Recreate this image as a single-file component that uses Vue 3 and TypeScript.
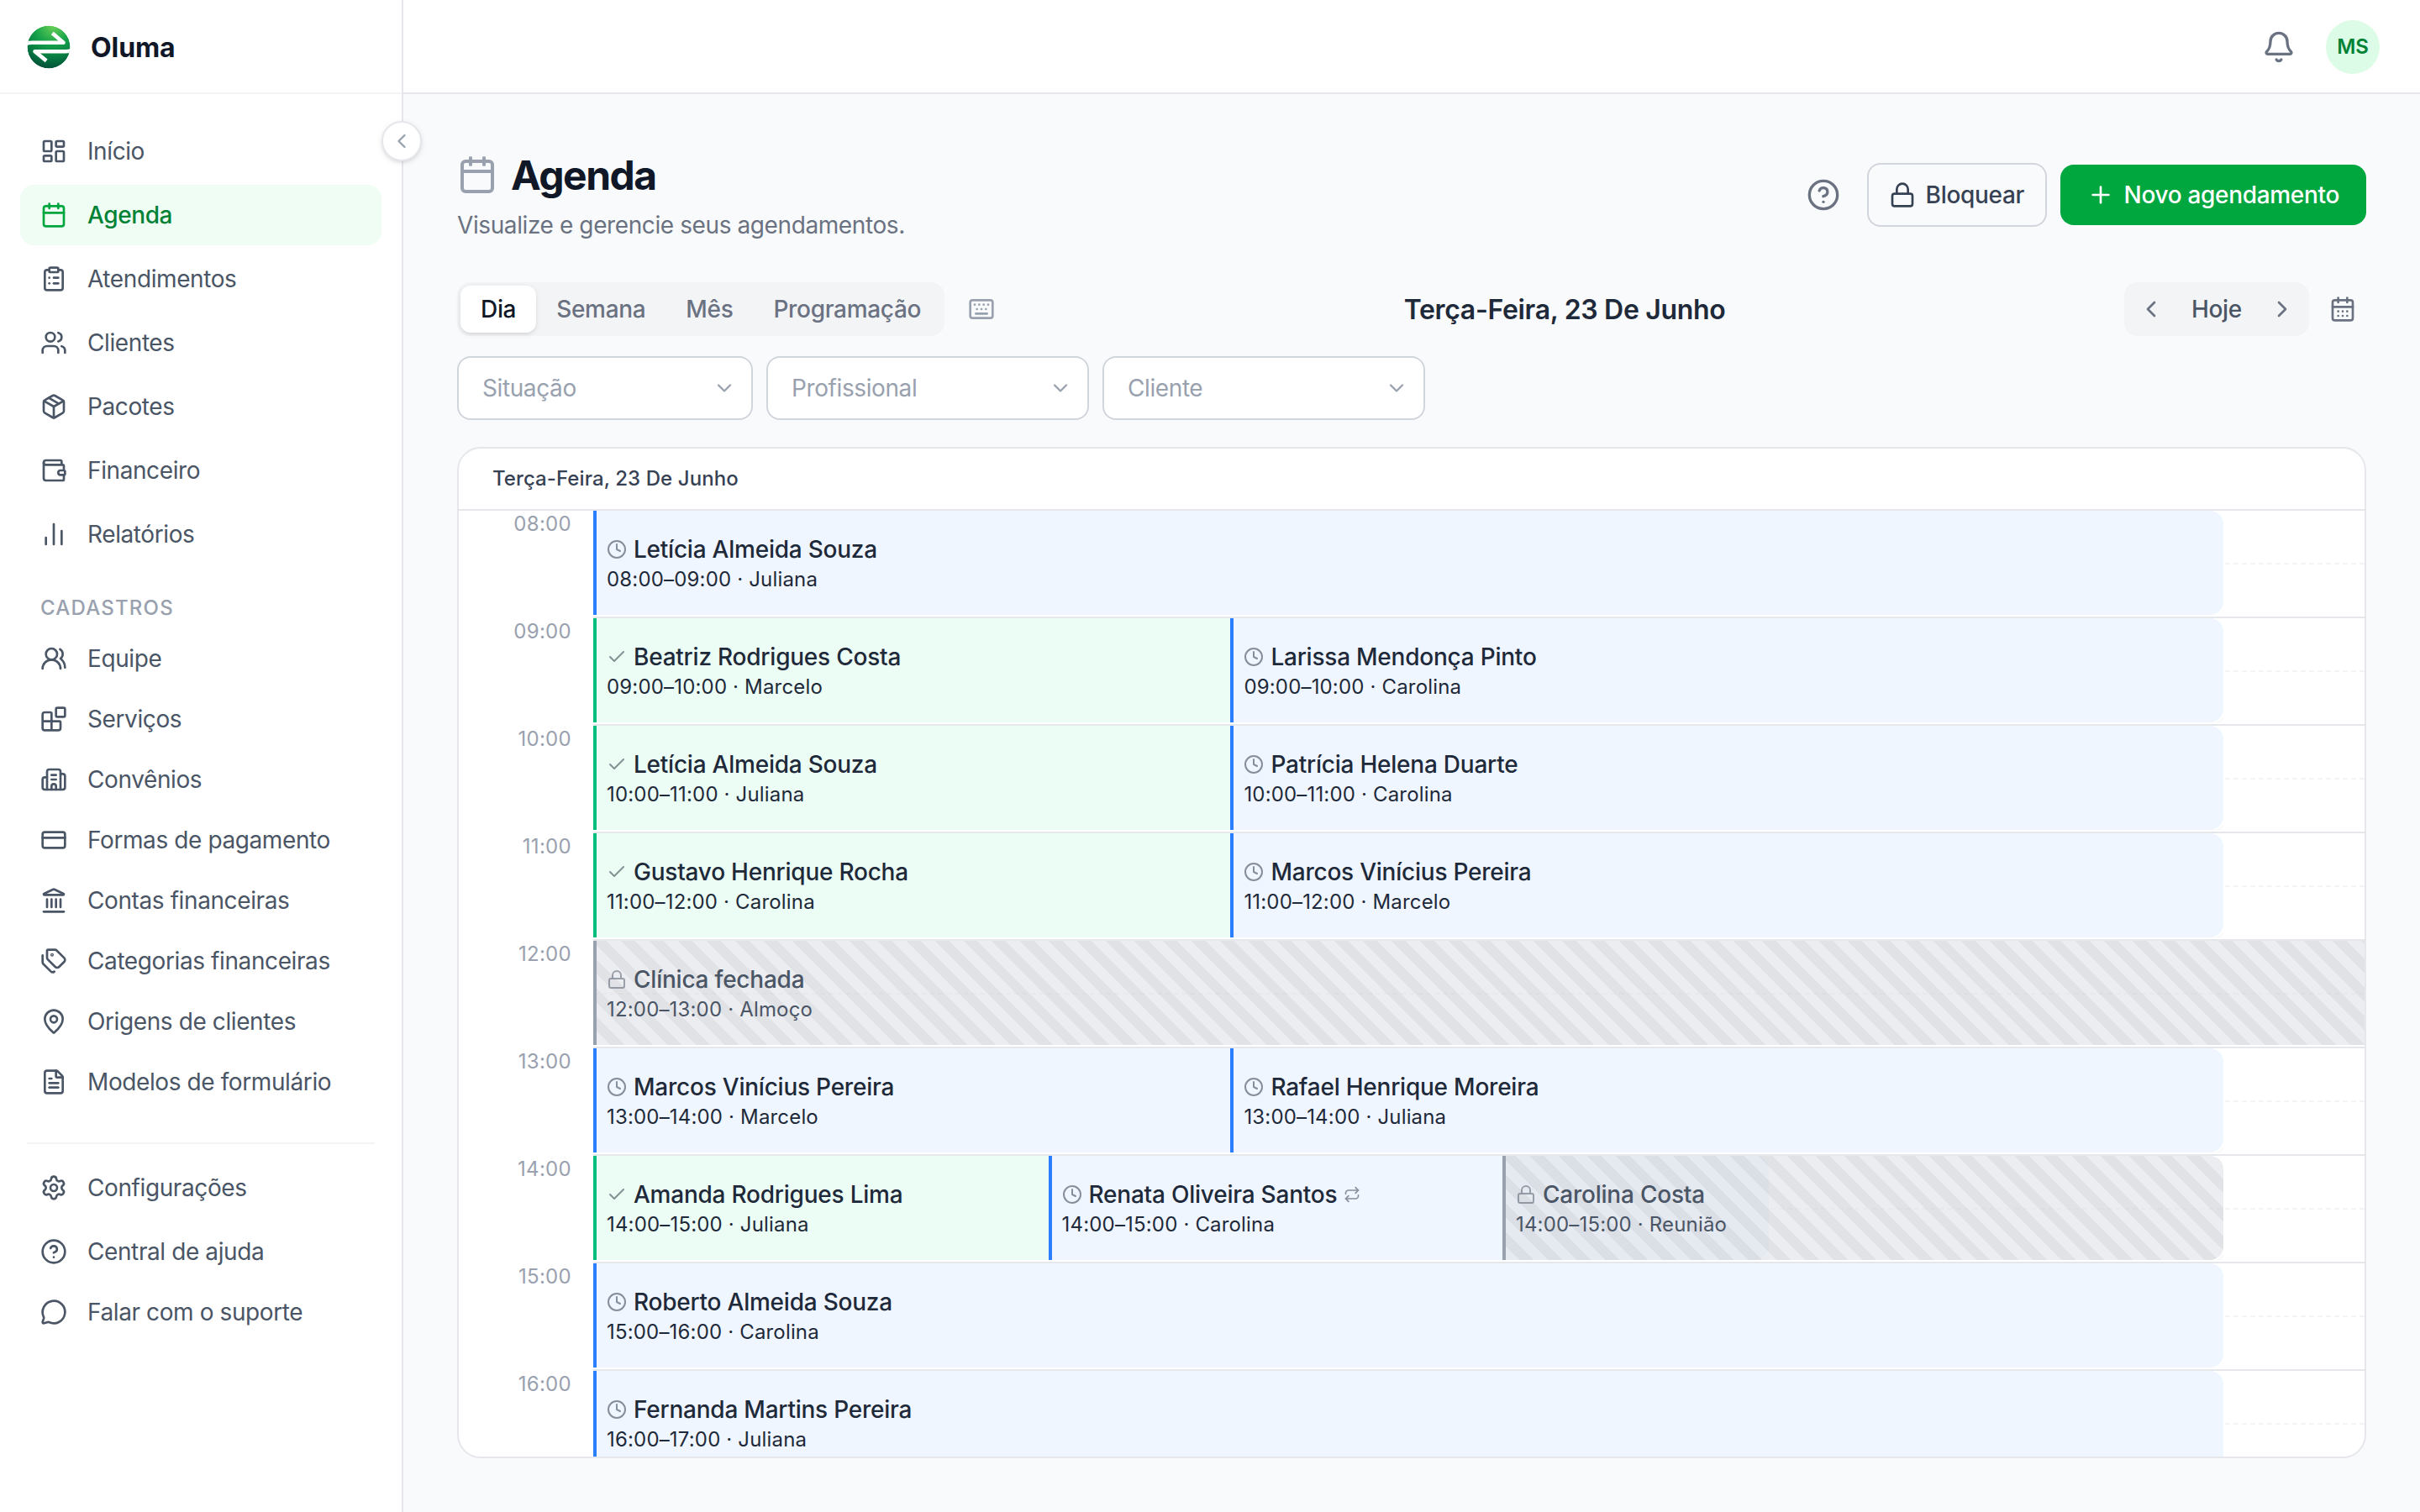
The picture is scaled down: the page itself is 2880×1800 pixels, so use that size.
<script setup lang="ts">
import { defineComponent, h } from 'vue'

type Shape = [string, Record<string, string | number>]

const p = (d: string): Shape => ['path', { d }]
const r = (x: number, y: number, width: number, height: number, rx: number): Shape => [
  'rect',
  { x, y, width, height, rx },
]
const c = (cx: number, cy: number, radius: number): Shape => ['circle', { cx, cy, r: radius }]

const icons: Record<string, Shape[]> = {
  dashboard: [r(3, 3, 7, 9, 1), r(14, 3, 7, 5, 1), r(14, 12, 7, 9, 1), r(3, 16, 7, 5, 1)],
  calendar: [p('M8 2v4'), p('M16 2v4'), r(3, 4, 18, 18, 2), p('M3 10h18')],
  calendarDays: [
    p('M8 2v4'), p('M16 2v4'), r(3, 4, 18, 18, 2), p('M3 10h18'),
    p('M8 14h.01'), p('M12 14h.01'), p('M16 14h.01'), p('M8 18h.01'), p('M12 18h.01'), p('M16 18h.01'),
  ],
  clipboard: [
    r(8, 2, 8, 4, 1),
    p('M16 4h2a2 2 0 0 1 2 2v14a2 2 0 0 1-2 2H6a2 2 0 0 1-2-2V6a2 2 0 0 1 2-2h2'),
    p('M12 11h4'), p('M12 16h4'), p('M8 11h.01'), p('M8 16h.01'),
  ],
  users: [
    p('M16 21v-2a4 4 0 0 0-4-4H6a4 4 0 0 0-4 4v2'), p('M16 3.128a4 4 0 0 1 0 7.744'),
    p('M22 21v-2a4 4 0 0 0-3-3.87'), c(9, 7, 4),
  ],
  package: [
    p('M11 21.73a2 2 0 0 0 2 0l7-4A2 2 0 0 0 21 16V8a2 2 0 0 0-1-1.73l-7-4a2 2 0 0 0-2 0l-7 4A2 2 0 0 0 3 8v8a2 2 0 0 0 1 1.73z'),
    p('M12 22V12'), p('M3.29 7 12 12l8.71-5'), p('m7.5 4.27 9 5.15'),
  ],
  wallet: [
    p('M19 7V4a1 1 0 0 0-1-1H5a2 2 0 0 0 0 4h15a1 1 0 0 1 1 1v4h-3a2 2 0 0 0 0 4h3a1 1 0 0 0 1-1v-2a1 1 0 0 0-1-1'),
    p('M3 5v14a2 2 0 0 0 2 2h15a1 1 0 0 0 1-1v-4'),
  ],
  chart: [p('M5 21v-6'), p('M12 21V3'), p('M19 21V9')],
  usersRound: [p('M18 21a8 8 0 0 0-16 0'), c(10, 8, 5), p('M22 20c0-3.37-2-6.5-4-8a5 5 0 0 0-.45-8.3')],
  blocks: [
    p('M10 22V7a1 1 0 0 0-1-1H4a2 2 0 0 0-2 2v12a2 2 0 0 0 2 2h12a2 2 0 0 0 2-2v-5a1 1 0 0 0-1-1H2'),
    r(14, 2, 8, 8, 1),
  ],
  building: [
    p('M10 12h4'), p('M10 8h4'), p('M14 21v-3a2 2 0 0 0-4 0v3'),
    p('M6 10H4a2 2 0 0 0-2 2v7a2 2 0 0 0 2 2h16a2 2 0 0 0 2-2V9a2 2 0 0 0-2-2h-2'),
    p('M6 21V5a2 2 0 0 1 2-2h8a2 2 0 0 1 2 2v16'),
  ],
  card: [r(2, 5, 20, 14, 2), p('M2 10h20')],
  landmark: [
    p('M10 18v-7'),
    p('M11.12 2.198a2 2 0 0 1 1.76.006l7.866 3.847c.476.233.31.949-.22.949H3.474c-.53 0-.695-.716-.22-.949z'),
    p('M14 18v-7'), p('M18 18v-7'), p('M3 22h18'), p('M6 18v-7'),
  ],
  tags: [
    p('M13.172 2a2 2 0 0 1 1.414.586l6.71 6.71a2.4 2.4 0 0 1 0 3.408l-4.592 4.592a2.4 2.4 0 0 1-3.408 0l-6.71-6.71A2 2 0 0 1 6 9.172V3a1 1 0 0 1 1-1z'),
    p('M2 7v6.172a2 2 0 0 0 .586 1.414l6.71 6.71a2.4 2.4 0 0 0 3.191.193'),
    c(10.5, 6.5, 0.5),
  ],
  pin: [
    p('M20 10c0 4.993-5.539 10.193-7.399 11.799a1 1 0 0 1-1.202 0C9.539 20.193 4 14.993 4 10a8 8 0 0 1 16 0'),
    c(12, 10, 3),
  ],
  file: [
    p('M6 22a2 2 0 0 1-2-2V4a2 2 0 0 1 2-2h8a2.4 2.4 0 0 1 1.704.706l3.588 3.588A2.4 2.4 0 0 1 20 8v12a2 2 0 0 1-2 2z'),
    p('M14 2v5a1 1 0 0 0 1 1h5'), p('M10 9H8'), p('M16 13H8'), p('M16 17H8'),
  ],
  settings: [
    p('M9.671 4.136a2.34 2.34 0 0 1 4.659 0 2.34 2.34 0 0 0 3.319 1.915 2.34 2.34 0 0 1 2.33 4.033 2.34 2.34 0 0 0 0 3.831 2.34 2.34 0 0 1-2.33 4.033 2.34 2.34 0 0 0-3.319 1.915 2.34 2.34 0 0 1-4.659 0 2.34 2.34 0 0 0-3.32-1.915 2.34 2.34 0 0 1-2.33-4.033 2.34 2.34 0 0 0 0-3.831A2.34 2.34 0 0 1 6.35 6.051a2.34 2.34 0 0 0 3.319-1.915'),
    c(12, 12, 3),
  ],
  help: [c(12, 12, 10), p('M9.09 9a3 3 0 0 1 5.83 1c0 2-3 3-3 3'), p('M12 17h.01')],
  message: [
    p('M2.992 16.342a2 2 0 0 1 .094 1.167l-1.065 3.29a1 1 0 0 0 1.236 1.168l3.413-.998a2 2 0 0 1 1.099.092 10 10 0 1 0-4.777-4.719'),
  ],
  bell: [
    p('M10.268 21a2 2 0 0 0 3.464 0'),
    p('M3.262 15.326A1 1 0 0 0 4 17h16a1 1 0 0 0 .74-1.673C19.41 13.956 18 12.499 18 8A6 6 0 0 0 6 8c0 4.499-1.411 5.956-2.738 7.326'),
  ],
  lock: [r(3, 11, 18, 11, 2), p('M7 11V7a5 5 0 0 1 10 0v4')],
  plus: [p('M5 12h14'), p('M12 5v14')],
  keyboard: [
    p('M10 8h.01'), p('M12 12h.01'), p('M14 8h.01'), p('M16 12h.01'), p('M18 8h.01'),
    p('M6 8h.01'), p('M7 16h10'), p('M8 12h.01'), r(2, 4, 20, 16, 2),
  ],
  left: [p('m15 18-6-6 6-6')],
  right: [p('m9 18 6-6-6-6')],
  down: [p('m6 9 6 6 6-6')],
  clock: [c(12, 12, 10), p('M12 6v6l4 2')],
  check: [p('M20 6 9 17l-5-5')],
  repeat: [p('m17 2 4 4-4 4'), p('M3 11v-1a4 4 0 0 1 4-4h14'), p('m7 22-4-4 4-4'), p('M21 13v1a4 4 0 0 1-4 4H3')],
}

const Icon = defineComponent({
  props: { name: { type: String, required: true }, size: { type: Number, default: 32 } },
  setup(props) {
    return () =>
      h(
        'svg',
        {
          width: props.size,
          height: props.size,
          viewBox: '0 0 24 24',
          fill: 'none',
          stroke: 'currentColor',
          'stroke-width': 2,
          'stroke-linecap': 'round',
          'stroke-linejoin': 'round',
        },
        (icons[props.name] ?? []).map(([tag, attrs]) => h(tag, attrs)),
      )
  },
})

interface NavItem { icon: string; label: string; active?: boolean }

const mainNav: NavItem[] = [
  { icon: 'dashboard', label: 'Início' },
  { icon: 'calendar', label: 'Agenda', active: true },
  { icon: 'clipboard', label: 'Atendimentos' },
  { icon: 'users', label: 'Clientes' },
  { icon: 'package', label: 'Pacotes' },
  { icon: 'wallet', label: 'Financeiro' },
  { icon: 'chart', label: 'Relatórios' },
]
const recordNav: NavItem[] = [
  { icon: 'usersRound', label: 'Equipe' },
  { icon: 'blocks', label: 'Serviços' },
  { icon: 'building', label: 'Convênios' },
  { icon: 'card', label: 'Formas de pagamento' },
  { icon: 'landmark', label: 'Contas financeiras' },
  { icon: 'tags', label: 'Categorias financeiras' },
  { icon: 'pin', label: 'Origens de clientes' },
  { icon: 'file', label: 'Modelos de formulário' },
]
const helpNav: NavItem[] = [
  { icon: 'help', label: 'Central de ajuda' },
  { icon: 'message', label: 'Falar com o suporte' },
]

const views = ['Dia', 'Semana', 'Mês', 'Programação']
const filters = [
  { label: 'Situação', width: 352 },
  { label: 'Profissional', width: 384 },
  { label: 'Cliente', width: 384 },
]

type Kind = 'scheduled' | 'done' | 'blocked'
interface Appointment {
  kind: Kind
  name: string
  detail: string
  start: number
  width: number
  repeats?: boolean
}
const kindIcon: Record<Kind, string> = { scheduled: 'clock', done: 'check', blocked: 'lock' }

// Horizontal extents inside the day lane, which is 2108px wide.
const FULL = 1940
const single = (kind: Kind, name: string, detail: string): Appointment => ({ kind, name, detail, start: 0, width: FULL })
const pair = (a: [Kind, string, string], b: [Kind, string, string]): Appointment[] => [
  { kind: a[0], name: a[1], detail: a[2], start: 0, width: 1181.6 },
  { kind: b[0], name: b[1], detail: b[2], start: 758.4, width: 1181.6 },
]

const hours: { label: string; items: Appointment[] }[] = [
  { label: '08:00', items: [single('scheduled', 'Letícia Almeida Souza', '08:00–09:00 · Juliana')] },
  {
    label: '09:00',
    items: pair(
      ['done', 'Beatriz Rodrigues Costa', '09:00–10:00 · Marcelo'],
      ['scheduled', 'Larissa Mendonça Pinto', '09:00–10:00 · Carolina'],
    ),
  },
  {
    label: '10:00',
    items: pair(
      ['done', 'Letícia Almeida Souza', '10:00–11:00 · Juliana'],
      ['scheduled', 'Patrícia Helena Duarte', '10:00–11:00 · Carolina'],
    ),
  },
  {
    label: '11:00',
    items: pair(
      ['done', 'Gustavo Henrique Rocha', '11:00–12:00 · Carolina'],
      ['scheduled', 'Marcos Vinícius Pereira', '11:00–12:00 · Marcelo'],
    ),
  },
  {
    label: '12:00',
    items: [{ kind: 'blocked', name: 'Clínica fechada', detail: '12:00–13:00 · Almoço', start: 0, width: 2124 }],
  },
  {
    label: '13:00',
    items: pair(
      ['scheduled', 'Marcos Vinícius Pereira', '13:00–14:00 · Marcelo'],
      ['scheduled', 'Rafael Henrique Moreira', '13:00–14:00 · Juliana'],
    ),
  },
  {
    label: '14:00',
    items: [
      { kind: 'done', name: 'Amanda Rodrigues Lima', detail: '14:00–15:00 · Juliana', start: 0, width: 858 },
      { kind: 'scheduled', name: 'Renata Oliveira Santos', detail: '14:00–15:00 · Carolina', start: 541.6, width: 857, repeats: true },
      { kind: 'blocked', name: 'Carolina Costa', detail: '14:00–15:00 · Reunião', start: 1082, width: 858 },
    ],
  },
  { label: '15:00', items: [single('scheduled', 'Roberto Almeida Souza', '15:00–16:00 · Carolina')] },
  { label: '16:00', items: [single('scheduled', 'Fernanda Martins Pereira', '16:00–17:00 · Juliana')] },
]
</script>

<template>
  <div class="app">
    <aside class="sidebar">
      <div class="brand">
        <svg class="logo" width="52" height="52" viewBox="0 0 52 52">
          <defs>
            <radialGradient id="logo-fill" cx="0.6" cy="0" r="1">
              <stop offset="0" stop-color="#6bd058" />
              <stop offset="0.42" stop-color="#16a34a" />
              <stop offset="0.75" stop-color="#067a42" />
              <stop offset="1" stop-color="#02523a" />
            </radialGradient>
            <clipPath id="logo-clip"><circle cx="26" cy="26" r="25.5" /></clipPath>
          </defs>
          <g clip-path="url(#logo-clip)">
            <circle cx="26" cy="26" r="25.5" fill="url(#logo-fill)" />
            <path d="M-3 22.8Q1 20.7 6 20.7H43.500L30.300 9.600" fill="none" stroke="#fff" stroke-width="4.600" stroke-linejoin="round" />
            <path d="M55 29.200Q51 31.200 46 31.200H9.500L23.200 42.400" fill="none" stroke="#fff" stroke-width="4.600" stroke-linejoin="round" />
          </g>
        </svg>
        <span class="brand-name">Oluma</span>
      </div>
      <button class="collapse"><Icon name="left" :size="28" /></button>
      <nav class="nav">
        <div class="group spaced">
          <a v-for="item in mainNav" :key="item.label" class="nav-item" :class="{ active: item.active }">
            <Icon :name="item.icon" />{{ item.label }}
          </a>
        </div>
        <div class="section">CADASTROS</div>
        <div class="group">
          <a v-for="item in recordNav" :key="item.label" class="nav-item">
            <Icon :name="item.icon" />{{ item.label }}
          </a>
        </div>
        <div class="divider"></div>
        <div class="group spaced">
          <a class="nav-item"><Icon name="settings" />Configurações</a>
          <div class="group">
            <a v-for="item in helpNav" :key="item.label" class="nav-item">
              <Icon :name="item.icon" />{{ item.label }}
            </a>
          </div>
        </div>
      </nav>
    </aside>

    <div class="content">
      <header class="topbar">
        <Icon name="bell" :size="40" />
        <span class="avatar">MS</span>
      </header>

      <main class="page">
        <div class="heading">
          <div>
            <h1 class="title"><Icon name="calendar" :size="48" /><span>Agenda</span></h1>
            <p class="subtitle">Visualize e gerencie seus agendamentos.</p>
          </div>
          <div class="actions">
            <button class="help"><Icon name="help" :size="40" /></button>
            <button class="btn outline"><Icon name="lock" />Bloquear</button>
            <button class="btn primary"><Icon name="plus" />Novo agendamento</button>
          </div>
        </div>

        <div class="toolbar">
          <div class="left-tools">
            <div class="tabs">
              <button v-for="(view, i) in views" :key="view" class="tab" :class="{ on: i === 0 }">{{ view }}</button>
            </div>
            <button class="keys"><Icon name="keyboard" /></button>
          </div>
          <h2 class="date">Terça-Feira, 23 De Junho</h2>
          <div class="right-tools">
            <div class="pager">
              <button class="step"><Icon name="left" /></button>
              <button class="today">Hoje</button>
              <button class="step"><Icon name="right" /></button>
            </div>
            <button class="pick"><Icon name="calendarDays" /></button>
          </div>
        </div>

        <div class="filters">
          <div v-for="f in filters" :key="f.label" class="select" :style="{ width: f.width + 'px' }">
            <span>{{ f.label }}</span><Icon name="down" :size="28" />
          </div>
        </div>

        <section class="calendar">
          <div class="day-head">Terça-Feira, 23 De Junho</div>
          <div class="hours">
            <div v-for="hour in hours" :key="hour.label" class="hour">
              <div class="time">{{ hour.label }}</div>
              <div class="lane">
                <div class="half"></div>
                <div
                  v-for="(item, i) in hour.items"
                  :key="i"
                  class="slot"
                  :style="{ marginLeft: item.start + 'px', width: item.width + 'px' }"
                >
                  <article class="event" :class="[item.kind, { stacked: i > 0 }]">
                    <div class="event-title">
                      <Icon :name="kindIcon[item.kind]" :size="24" />
                      <span>{{ item.name }}</span>
                      <Icon v-if="item.repeats" name="repeat" :size="20" />
                    </div>
                    <div class="event-detail">{{ item.detail }}</div>
                  </article>
                </div>
              </div>
            </div>
          </div>
        </section>
      </main>
    </div>
  </div>
</template>

<style>
body {
  background: #f9fafb;
}
</style>

<style scoped>
* {
  box-sizing: border-box;
}
.app {
  display: flex;
  width: 2880px;
  height: 1800px;
  overflow: hidden;
  background: #f9fafb;
  color: #4a5565;
  font-family: Inter, 'Liberation Sans', sans-serif;
  font-size: 28px;
  line-height: 40px;
  letter-spacing: -0.4px;
}
svg {
  display: block;
  flex: none;
}
button {
  display: flex;
  align-items: center;
  border: 0;
  padding: 0;
  margin: 0;
  background: none;
  color: inherit;
  font: inherit;
  letter-spacing: -0.32px;
}
h1, h2, p {
  margin: 0;
}

.sidebar {
  position: relative;
  flex: none;
  width: 480px;
  background: #fff;
  border-right: 2px solid #e5e7eb;
}
.brand {
  display: flex;
  align-items: center;
  gap: 24px;
  height: 112px;
  padding: 2px 0 0 32px;
  border-bottom: 2px solid #f3f4f6;
}
.brand-name {
  padding-top: 1px;
  color: #101828;
  font-size: 32px;
  font-weight: 700;
  letter-spacing: -0.1px;
}
.collapse {
  position: absolute;
  top: 144px;
  right: -24px;
  z-index: 2;
  justify-content: center;
  width: 48px;
  height: 48px;
  border: 2px solid #e5e7eb;
  border-radius: 50%;
  background: #fff;
  color: #99a1af;
  box-shadow: 0 2px 6px rgba(0, 0, 0, 0.1), 0 2px 4px -2px rgba(0, 0, 0, 0.1);
}
.nav {
  padding: 32px 24px 0;
}
.group {
  display: flex;
  flex-direction: column;
}
.spaced {
  gap: 4px;
}
.nav-item {
  display: flex;
  align-items: center;
  gap: 24px;
  height: 72px;
  padding-left: 24px;
  border-radius: 16px;
  white-space: nowrap;
}
.nav-item.active {
  background: #f0fdf4;
  color: #008236;
  font-weight: 500;
}
.nav-item.active svg {
  color: #00a63e;
}
.section {
  margin: 36px 0 8px;
  padding-left: 24px;
  color: #99a1af;
  font-size: 24px;
  font-weight: 500;
  line-height: 32px;
  letter-spacing: 1.2px;
}
.divider {
  height: 2px;
  margin: 36px 8px 16px;
  background: #f3f4f6;
}

.content {
  display: flex;
  flex-direction: column;
  flex: 1;
  min-width: 0;
}
.topbar {
  display: flex;
  align-items: center;
  justify-content: flex-end;
  gap: 36px;
  flex: none;
  height: 112px;
  padding: 2px 48px 0 0;
  background: #fff;
  border-bottom: 2px solid #e5e7eb;
  color: #6a7282;
}
.avatar {
  display: flex;
  align-items: center;
  justify-content: center;
  width: 64px;
  height: 64px;
  border-radius: 50%;
  background: #dcfce7;
  color: #008236;
  font-size: 24px;
  font-weight: 600;
  letter-spacing: 0;
}
.page {
  display: flex;
  flex-direction: column;
  flex: 1;
  min-height: 0;
  padding: 64px;
}
.heading {
  display: flex;
  align-items: center;
  justify-content: space-between;
  height: 112px;
}
.title {
  display: flex;
  align-items: center;
  gap: 16px;
  height: 64px;
  color: #101828;
  font-size: 48px;
  font-weight: 700;
  line-height: 64px;
  letter-spacing: -1.5px;
}
.title span {
  padding-top: 2px;
}
.title svg {
  color: #99a1af;
}
.subtitle {
  margin-top: 8px;
  color: #6a7282;
}
.actions {
  display: flex;
  align-items: center;
  gap: 16px;
}
.help {
  padding: 16px;
  color: #6a7282;
}
.btn {
  justify-content: space-between;
  border-radius: 16px;
  font-weight: 500;
  white-space: nowrap;
}
.outline {
  width: 214px;
  height: 76px;
  padding: 0 25px 0 24px;
  border: 2px solid #d1d5dc;
  color: #364153;
}
.primary {
  width: 364px;
  height: 72px;
  padding: 0 32px;
  background: #00a63e;
  color: #fff;
}
.toolbar {
  display: flex;
  align-items: center;
  justify-content: space-between;
  height: 64px;
  margin-top: 48px;
}
.left-tools,
.right-tools {
  display: flex;
  align-items: center;
}
.left-tools {
  gap: 16px;
}
.right-tools {
  gap: 12px;
}
.tabs,
.pager {
  display: flex;
  padding: 4px;
  border-radius: 16px;
  background: #f3f4f6;
}
.tab {
  height: 56px;
  padding: 0 24px;
  border-radius: 12px;
  color: #6a7282;
  font-weight: 500;
}
.tab.on {
  background: #fff;
  color: #101828;
  box-shadow: 0 2px 6px rgba(0, 0, 0, 0.1), 0 2px 4px -2px rgba(0, 0, 0, 0.1);
}
.keys,
.pick,
.step {
  height: 56px;
  padding: 0 12px;
  color: #6a7282;
}
.keys {
  color: #99a1af;
}
.date {
  padding-top: 2px;
  color: #1e2939;
  font-size: 32px;
  font-weight: 600;
  letter-spacing: -0.32px;
  white-space: nowrap;
}
.today {
  justify-content: center;
  width: 100px;
  color: #4a5565;
  font-weight: 500;
}
.filters {
  display: flex;
  gap: 16px;
  margin-top: 24px;
}
.select {
  display: flex;
  align-items: center;
  justify-content: space-between;
  height: 76px;
  padding: 0 18px 0 28px;
  border: 2px solid #d1d5dc;
  border-radius: 16px;
  background: #fff;
  color: #99a1af;
}

.calendar {
  display: flex;
  flex-direction: column;
  flex: 1;
  min-height: 0;
  margin-top: 32px;
  overflow: hidden;
  border: 2px solid #e5e7eb;
  border-radius: 28px;
  background: #fff;
}
.day-head {
  display: flex;
  align-items: center;
  flex: none;
  height: 74px;
  padding-left: 40px;
  border-bottom: 2px solid #e5e7eb;
  color: #364153;
  font-size: 24px;
  font-weight: 500;
  letter-spacing: 0.08px;
}
.hours {
  flex: 1;
  min-height: 0;
  overflow: hidden;
}
.hour {
  display: flex;
  height: 128px;
}
.time {
  flex: none;
  width: 160px;
  padding-right: 26px;
  color: #99a1af;
  font-size: 24px;
  line-height: 32px;
  letter-spacing: 0.3px;
  text-align: right;
}
.lane {
  display: grid;
  grid-template-rows: 126px;
  grid-template-columns: 100%;
  flex: 1;
  min-width: 0;
  border-bottom: 2px solid #e5e7eb;
}
.half {
  grid-area: 1 / 1;
  height: 2px;
  margin-top: 62px;
  border-top: 2px dashed #f3f4f6;
}
.slot {
  grid-area: 1 / 1;
  height: 124px;
  overflow: hidden;
}
.event {
  height: 124px;
  padding: 26px 12px 0;
  border-left: 4px solid;
  border-radius: 0 16px 16px 0;
  color: #1e2939;
}
.event.stacked {
  box-shadow: 0 0 0 2px #fff, 0 2px 6px rgba(0, 0, 0, 0.1);
}
.event.scheduled {
  background: #eff6ff;
  border-left-color: #2b7fff;
}
.event.done {
  background: #ecfdf5;
  border-left-color: #00bc7d;
}
.event.blocked {
  border-left-color: #99a1af;
  color: #4a5565;
  background: repeating-linear-gradient(
    45deg,
    rgba(223, 225, 231, 0.6) 0,
    rgba(223, 225, 231, 0.6) 12px,
    rgba(205, 207, 212, 0.6) 12px,
    rgba(205, 207, 212, 0.6) 24px
  );
}
.event-title {
  display: flex;
  align-items: center;
  gap: 8px;
  font-weight: 500;
  letter-spacing: -0.23px;
  white-space: nowrap;
}
.event-title svg {
  opacity: 0.5;
}
.event-detail {
  font-size: 24px;
  line-height: 32px;
  letter-spacing: 0.17px;
  white-space: nowrap;
}
</style>
